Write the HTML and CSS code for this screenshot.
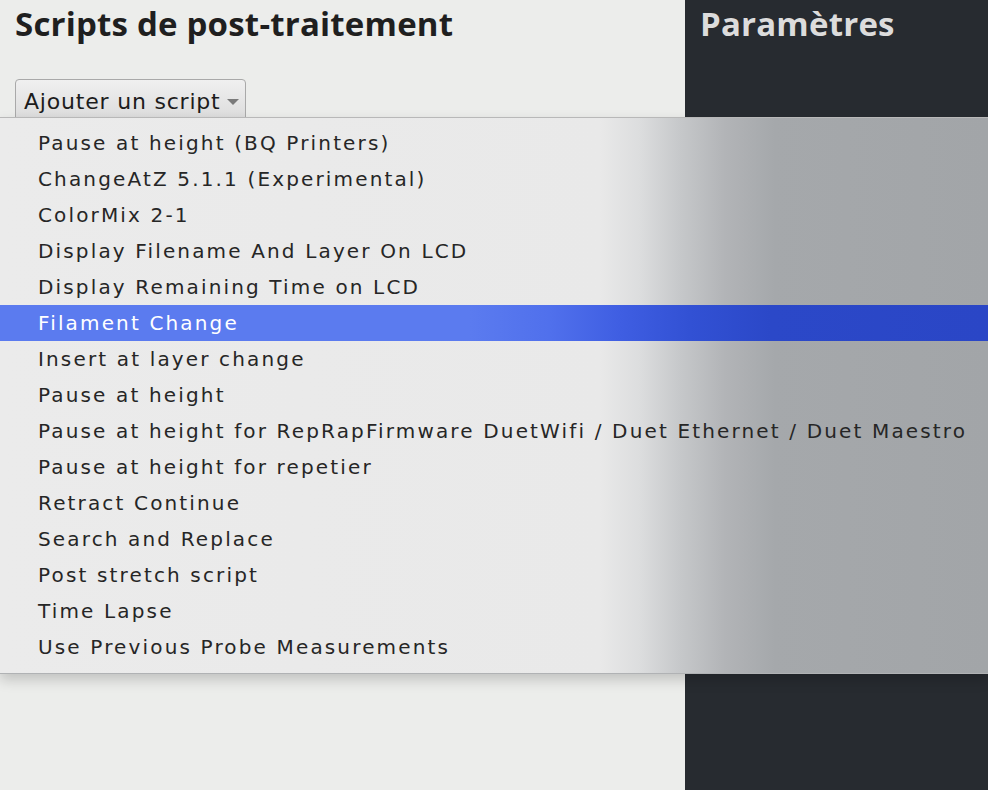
FILE: index.html
```html
<!DOCTYPE html>
<html lang="fr">
<head>
<meta charset="utf-8">
<link rel="stylesheet" href="styles.css">
</head>
<body>
<div class="app">
  <section class="left">
    <h1 class="title">Scripts de post-traitement</h1>
    <button class="addbtn"><span class="btnlabel">Ajouter un script</span><span class="caret"></span></button>
  </section>
  <section class="right">
    <h2 class="rtitle">Paramètres</h2>
  </section>
  <ul class="menu">
    <li>Pause at height (BQ Printers)</li>
    <li>ChangeAtZ 5.1.1 (Experimental)</li>
    <li>ColorMix 2-1</li>
    <li>Display Filename And Layer On LCD</li>
    <li>Display Remaining Time on LCD</li>
    <li class="active">Filament Change</li>
    <li>Insert at layer change</li>
    <li>Pause at height</li>
    <li>Pause at height for RepRapFirmware DuetWifi / Duet Ethernet / Duet Maestro</li>
    <li>Pause at height for repetier</li>
    <li>Retract Continue</li>
    <li>Search and Replace</li>
    <li>Post stretch script</li>
    <li>Time Lapse</li>
    <li>Use Previous Probe Measurements</li>
  </ul>
</div>
</body>
</html>
```
FILE: styles.css
```css
html, body {
  margin: 0;
  padding: 0;
}
body {
  width: 988px;
  height: 790px;
  overflow: hidden;
  background: #ecedeb;
}
.app {
  position: relative;
  display: flex;
  width: 988px;
  height: 790px;
}
.left {
  width: 685px;
  background: #ecedeb;
  padding: 0 0 0 15px;
  box-sizing: border-box;
}
.title {
  margin: 2px 0 0 0;
  font-family: "Open Sans", sans-serif;
  font-weight: 700;
  font-size: 33px;
  line-height: 44px;
  color: #1f1f1f;
  letter-spacing: 0.2px;
}
.addbtn {
  margin-top: 33px;
  height: 42px;
  box-sizing: border-box;
  padding: 3px 6px 0 8px;
  border: 1px solid #a9a9a9;
  border-radius: 4px;
  background: linear-gradient(#f0f0f0, #dcdcdc);
  font-family: "DejaVu Sans", "Liberation Sans", sans-serif;
  font-size: 22px;
  line-height: 38px;
  color: #1c1c1c;
  display: flex;
  align-items: flex-start;
  gap: 6px;
}
.btnlabel {
  letter-spacing: 0.8px;
}
.caret {
  display: inline-block;
  width: 0;
  height: 0;
  border-left: 6px solid transparent;
  border-right: 6px solid transparent;
  border-top: 6px solid #7a7a7a;
  margin-top: 16px;
}
.right {
  flex: 1;
  background: #272b30;
  padding-left: 15px;
}
.rtitle {
  margin: 2px 0 0 0;
  font-family: "Open Sans", sans-serif;
  font-weight: 700;
  font-size: 33px;
  line-height: 44px;
  color: #dcdcdc;
  letter-spacing: 0.2px;
}
.menu {
  position: absolute;
  left: 0;
  top: 117px;
  width: 988px;
  margin: 0;
  padding: 7px 0 8px 0;
  list-style: none;
  box-sizing: border-box;
  background: linear-gradient(to right, #ebebeb 0, #e9e9e9 600px, #dcddde 640px, #c6c8ca 680px, #b2b4b7 725px, #a5a8ab 775px, #a2a5a8 988px);
  border-top: 1px solid #b8b8b8;
  border-bottom: 1px solid #b0b2b4;
  box-shadow: 0 6px 12px rgba(0, 0, 0, 0.18);
}
.menu li {
  height: 36px;
  line-height: 36px;
  padding-left: 38px;
  font-family: "DejaVu Sans", "Liberation Sans", sans-serif;
  font-size: 20px;
  letter-spacing: 2.15px;
  color: #262626;
  white-space: nowrap;
}
.menu li.active {
  color: #ffffff;
  background: linear-gradient(to right, #5b7bef 0, #5b7bef 470px, #5070ec 550px, #3f5ee2 620px, #3251d4 690px, #2b48c8 770px, #2a46c6 988px);
}
```
